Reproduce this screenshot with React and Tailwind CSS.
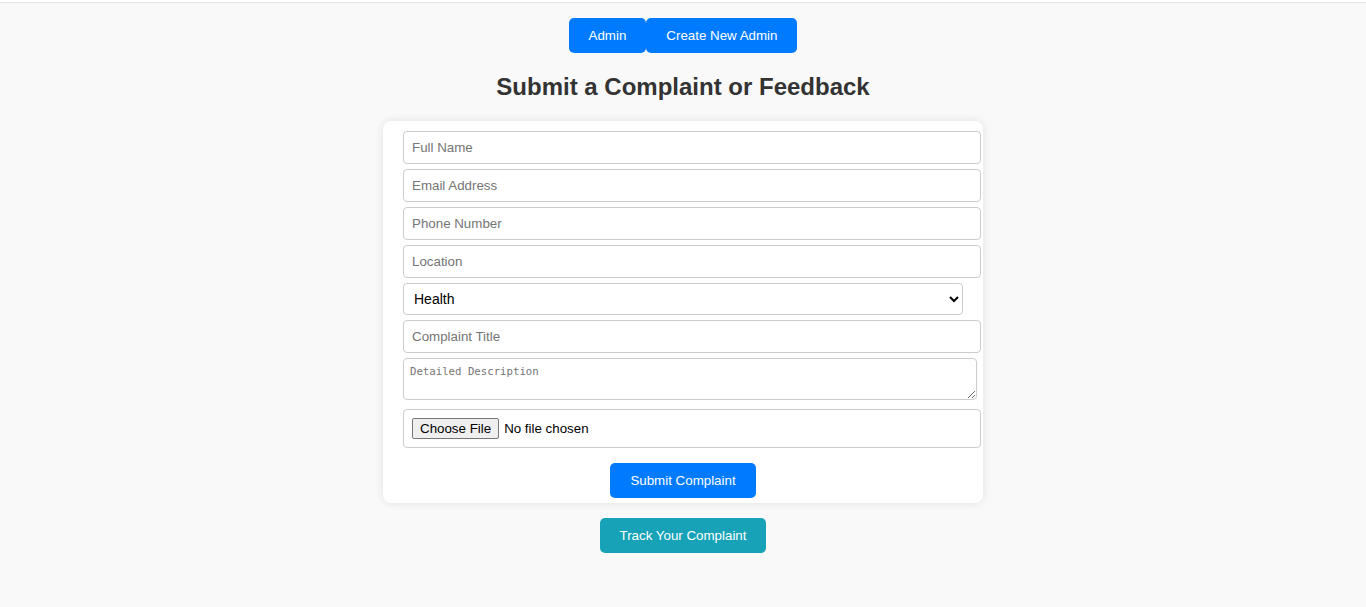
import React from 'react';

const inputCls =
    "block w-[578px] h-[33px] px-2 mb-[5px] bg-white border border-[#ccc] rounded-[4px] text-[13.33px] text-black placeholder:text-[#757575] outline-none";

const btnCls = "h-[35px] px-5 text-white text-[13.33px] rounded-[5px]";

const App = () => {
    return (
        <div className="min-h-[607px] bg-[#f9f9f9] font-['Liberation_Sans',Arial,sans-serif] text-[#333]">
            {/* top rule */}
            <div className="h-[3px] border-b border-[#e3e3e3] bg-white"></div>

            {/* admin nav */}
            <div className="flex justify-center pt-[15px]">
                <button className={`${btnCls} bg-[#007bff]`}>Admin</button>
                <button className={`${btnCls} bg-[#007bff]`}>Create New Admin</button>
            </div>

            <h2 className="mt-[20px] text-center text-2xl font-bold leading-[28px] text-[#333]">
                Submit a Complaint or Feedback
            </h2>

            {/* form card */}
            <form className="mt-[20px] mx-auto w-[600px] bg-white rounded-lg shadow-[0_0_10px_rgba(0,0,0,0.1)] pt-[10px] px-5 pb-[5px]">
                <input type="text" placeholder="Full Name" className={inputCls} />
                <input type="email" placeholder="Email Address" className={inputCls} />
                <input type="text" placeholder="Phone Number" className={inputCls} />
                <input type="text" placeholder="Location" className={inputCls} />
                <select
                    defaultValue="Health"
                    className="block w-[560px] h-[32px] pl-[6px] mb-[5px] bg-white border border-[#ccc] rounded-[4px] text-sm text-black outline-none"
                >
                    <option>Health</option>
                    <option>Education</option>
                    <option>Infrastructure</option>
                    <option>Other</option>
                </select>
                <input type="text" placeholder="Complaint Title" className={inputCls} />
                <textarea
                    placeholder="Detailed Description"
                    className="block w-[574px] h-[42px] px-[6px] py-[6px] mb-[9px] bg-white border border-[#ccc] rounded-[4px] font-['DejaVu_Sans_Mono',monospace] text-[10.7px] leading-[14px] text-black placeholder:text-[#757575] outline-none"
                ></textarea>
                <input
                    type="file"
                    className="block w-[578px] h-[39px] px-2 py-[8px] bg-white border border-[#ccc] rounded-[4px] text-[13.33px] leading-[15px] text-black file:mr-[5px] file:px-[7px] file:py-[2px] file:border file:border-[#767676] file:bg-[#efefef] file:rounded-[2px] file:text-black file:text-[13.33px]"
                />
                <div className="flex justify-center mt-[15px]">
                    <button type="button" className={`${btnCls} bg-[#007bff]`}>
                        Submit Complaint
                    </button>
                </div>
            </form>

            <div className="flex justify-center mt-[15px]">
                <button className={`${btnCls} bg-[#17a2b8]`}>Track Your Complaint</button>
            </div>
        </div>
    );
};

export default App;
